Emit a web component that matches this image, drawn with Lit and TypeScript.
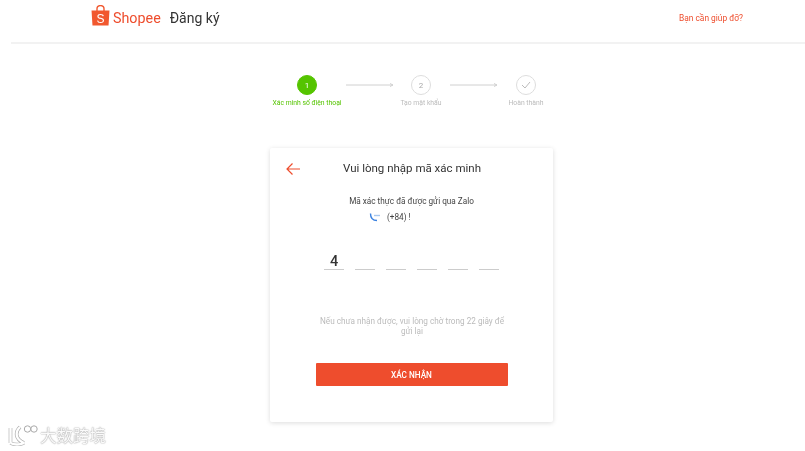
import { LitElement, html, svg, css } from "lit";
import { customElement } from "lit/decorators.js";

@customElement("app-root")
export class AppRoot extends LitElement {
  static styles = css`
    :host { display: block; width: 805px; height: 451px; overflow: hidden; background: #fff; position: relative; font-family: "Roboto", "Liberation Sans", sans-serif; color: #333; }
    .page { filter: blur(0.65px); height: 451px; display: flex; flex-direction: column; }
    .header { height: 42px; margin-left: 11px; padding: 0 62px 0 80px; display: flex; align-items: center; border-bottom: 2px solid #f2f2f2; flex: none; }
    .logo { display: flex; align-items: center; margin-top: -12px; }
    .bag { width: 19px; height: 21px; display: block; }
    .brand { font-size: 14.3px; color: #ee4d2d; margin: 6px 0 0 3px; line-height: 20px; }
    .reg { font-size: 14px; color: #333; margin: 6px 0 0 9px; line-height: 20px; }
    .help { margin-left: auto; font-size: 8.4px; color: #ee4d2d; margin-top: -6px; }
    .steps { display: flex; justify-content: flex-start; margin-top: 31px; flex: none; height: 33px; padding-left: 272px; }
    .step { display: flex; flex-direction: column; align-items: center; width: 70px; flex: none; }
    .circle { width: 20px; height: 20px; box-sizing: border-box; border-radius: 50%; border: 1px solid #ddd; display: flex; align-items: center; justify-content: center; font-size: 8px; color: #aaa; flex: none; }
    .circle.on { background: #55c400; border-color: #55c400; color: #fff; }
    .lbl { font-size: 6.8px; color: #bbb; margin-top: 4px; white-space: nowrap; line-height: 8px; }
    .lbl.on { color: #55c400; }
    .conn { width: 50px; flex: none; height: 20px; display: block; }
    .conn.a { margin: 0 -9px 0 3px; }
    .conn.b { margin: 0 -8px 0 -7px; }
    .wrap { display: flex; justify-content: flex-start; padding-left: 270px; margin-top: 40px; flex: none; }
    .card { width: 283px; height: 274px; box-sizing: border-box; background: #fff; box-shadow: 0 1px 5px rgba(0,0,0,.14); border-radius: 2px; display: flex; flex-direction: column; align-items: center; }
    .top { width: 100%; height: 40px; display: flex; align-items: center; position: relative; justify-content: center; flex: none; }
    .back { position: absolute; left: 15px; top: 14px; width: 16px; height: 14px; }
    .title { font-size: 11.5px; color: #333; margin-left: 1px; }
    .sent { font-size: 8.2px; color: #444; margin-top: 8px; line-height: 10px; }
    .phone { display: flex; align-items: center; width: 100%; padding-left: 99px; box-sizing: border-box; margin-top: 5px; height: 12px; font-size: 8.2px; color: #444; gap: 5px; }
    .phone svg { width: 13px; height: 10px; }
    .code { display: flex; gap: 11px; margin-top: 22px; }
    .cell { width: 20px; height: 24px; border-bottom: 1px solid #ccc; font-size: 14.5px; font-weight: 500; line-height: 33px; text-align: center; color: #333; }
    .hint { width: 192px; text-align: center; font-size: 8.2px; line-height: 10px; color: #bbb; margin-top: 46px; margin-left: 1px; }
    .btn { width: 192px; height: 23px; background: #ee4d2d; color: #fff; font-size: 8.2px; font-weight: 500; display: flex; align-items: center; justify-content: center; margin-top: 27px; border-radius: 1px; flex: none; }
    .mark { position: absolute; left: 8px; top: 424px; display: flex; align-items: center; gap: 2px; color: rgba(255,255,255,.95); text-shadow: 0 0 1.5px #999, 0 0 1px #aaa; font-family: "Noto Sans CJK SC", sans-serif; font-size: 16.5px; line-height: 22px; filter: blur(0.4px); }
    .mark svg { width: 30px; height: 22px; }
  `;

  render() {
    const check = html`<svg width="10" height="8" viewBox="0 0 10 8"><path d="M1 4l3 3 5-6" fill="none" stroke="#bbb"/></svg>`;
    const arrow = svg`<path d="M1 10H48M45 8.5l3 1.5-3 1.5" fill="none" stroke="#d0d0d0" stroke-width="1"/>`;
    return html`
      <div class="page">
        <div class="header">
          <div class="logo">
            <svg class="bag" viewBox="0 0 19 21"><path d="M0.5 5.5H18.5L17.5 20.5H1.5Z" fill="#f1582f"/><path d="M6 6V3.8a3.5 3.2 0 0 1 7 0V6" fill="none" stroke="#f1582f" stroke-width="1.4"/><text x="9.5" y="17.5" font-size="12" fill="#fff" text-anchor="middle" font-family="Liberation Sans">S</text></svg>
            <span class="brand">Shopee</span>
            <span class="reg">Đăng ký</span>
          </div>
          <span class="help">Bạn cần giúp đỡ?</span>
        </div>
        <div class="steps">
          <div class="step"><div class="circle on">1</div><div class="lbl on">Xác minh số điện thoại</div></div>
          <svg class="conn a" viewBox="0 0 50 20">${arrow}</svg>
          <div class="step"><div class="circle">2</div><div class="lbl">Tạo mật khẩu</div></div>
          <svg class="conn b" viewBox="0 0 50 20">${arrow}</svg>
          <div class="step"><div class="circle">${check}</div><div class="lbl">Hoàn thành</div></div>
        </div>
        <div class="wrap">
          <div class="card">
            <div class="top">
              <svg class="back" viewBox="0 0 16 14"><path d="M15 7H2M7.5 1.5 2 7l5.5 5.5" fill="none" stroke="#ee4d2d" stroke-width="1.2"/></svg>
              <span class="title">Vui lòng nhập mã xác minh</span>
            </div>
            <div class="sent">Mã xác thực đã được gửi qua Zalo</div>
            <div class="phone">
              <svg viewBox="0 0 13 10"><path d="M1.5 1.5C1.5 6 4 8.5 8 8.5" fill="none" stroke="#3b82e0" stroke-width="1.4"/><path d="M5 3.5H11" stroke="#a8c8ef" stroke-width="1.4"/></svg>
              <span>(+84) !</span>
            </div>
            <div class="code">
              <div class="cell">4</div><div class="cell"></div><div class="cell"></div><div class="cell"></div><div class="cell"></div><div class="cell"></div>
            </div>
            <div class="hint">Nếu chưa nhận được, vui lòng chờ trong 22 giây để gửi lại</div>
            <div class="btn">XÁC NHẬN</div>
          </div>
        </div>
      </div>
      <div class="mark">
        <svg viewBox="0 0 30 22"><g fill="none" stroke="#aaa" stroke-width="3.6"><path d="M2.5 4V19M12 3C7 8 7 15 16 19M2.5 19C6 21 12 21 16 19"/></g><g fill="none" stroke="#fff" stroke-width="2.4"><path d="M2.5 4V19M12 3C7 8 7 15 16 19M2.5 19C6 21 12 21 16 19"/></g><circle cx="19.5" cy="5" r="3.2" fill="#fff" stroke="#aaa"/><circle cx="26" cy="5" r="3.2" fill="#fff" stroke="#aaa"/></svg>
        <span>大数跨境</span>
      </div>
    `;
  }
}
